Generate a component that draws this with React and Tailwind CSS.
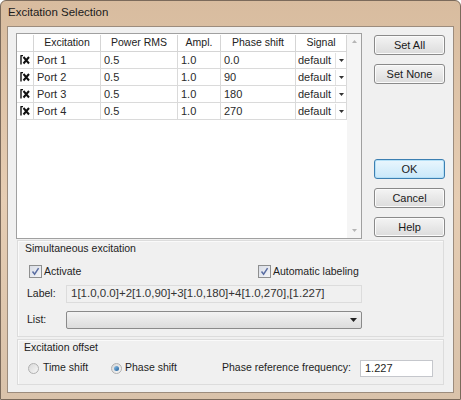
import React from 'react';

const rows = [
  { port: 'Port 1', rms: '0.5', ampl: '1.0', phase: '0.0' },
  { port: 'Port 2', rms: '0.5', ampl: '1.0', phase: '90' },
  { port: 'Port 3', rms: '0.5', ampl: '1.0', phase: '180' },
  { port: 'Port 4', rms: '0.5', ampl: '1.0', phase: '270' },
];

function XBox() {
  return (
    <svg width="11" height="10" viewBox="0 0 11 10">
      <path d="M1 0.5V9.5M0.5 0.5H3" stroke="#111" strokeWidth="1.4" fill="none" />
      <path d="M3.5 2L9 8.5M9 2L3.5 8.5" stroke="#111" strokeWidth="2" fill="none" />
    </svg>
  );
}

function Check() {
  return (
    <span className="w-[13px] h-[13px] border border-[#8e8f8f] bg-gradient-to-br from-[#d9dde6] to-[#f4f5f8] flex items-center justify-center">
      <svg width="9" height="9" viewBox="0 0 9 9">
        <path d="M1.5 4.5L3.6 7.2L7.6 1.2" stroke="#5a6ea3" strokeWidth="1.5" fill="none" />
      </svg>
    </span>
  );
}

function Radio({ on }) {
  return (
    <span className="w-[11px] h-[11px] rounded-full border border-[#b0b0b0] bg-gradient-to-br from-[#d8d8d8] to-[#f7f7f7] flex items-center justify-center">
      {on && <span className="w-[5px] h-[5px] rounded-full bg-gradient-to-br from-[#8fc3ea] to-[#1e5f98]" />}
    </span>
  );
}

function Btn({ children, primary }) {
  return (
    <div
      className={
        'w-[71px] h-[20px] rounded-[3px] flex items-center justify-center text-[#1a1a1a] ' +
        (primary
          ? 'border border-[#3c7fb1] bg-gradient-to-b from-[#eaf6fd] to-[#c9e8fa] shadow-[inset_0_0_0_1px_#b5e0f7]'
          : 'border border-[#8a8a8a] bg-gradient-to-b from-[#f4f4f4] to-[#dcdcdc] shadow-[inset_0_0_0_1px_#fbfbfb]')
      }
    >
      {children}
    </div>
  );
}

export default function App() {
  return (
    <div className="w-[461px] h-[400px] overflow-hidden font-['Liberation_Sans',Arial,sans-serif] text-[10.5px] text-[#1e1e1e] rounded-t-[6px] border border-[#7b6a5b] bg-gradient-to-b from-[#d8bc9f] via-[#e6cdb3] to-[#d9c2aa] flex flex-col">
      {/* title bar */}
      <div className="h-[25px] pl-[7px] pb-[1px] flex items-center text-[11.5px] text-[#1b1b1b]">Excitation Selection</div>

      {/* client area */}
      <div className="mx-[6px] h-[367px] border border-[#9c8c7d] bg-[#f0f0f0] pt-[6px] pl-[8px] flex flex-col">
        <div className="flex gap-[12px] h-[207px]">
          {/* table */}
          <div className="w-[346px] h-[206px] border border-[#a0a0a0] bg-white flex">
            <div className="w-[330px] flex flex-col pt-[1px]">
              <div className="flex h-[17px] border-b border-[#d5d5d5] text-[#222]">
                <div className="w-[17px] border-r border-[#d5d5d5]" />
                <div className="w-[67px] border-r border-[#d5d5d5] flex items-center justify-center">Excitation</div>
                <div className="w-[77px] border-r border-[#d5d5d5] flex items-center justify-center">Power RMS</div>
                <div className="w-[43px] border-r border-[#d5d5d5] flex items-center justify-center">Ampl.</div>
                <div className="w-[75px] border-r border-[#d5d5d5] flex items-center justify-center">Phase shift</div>
                <div className="w-[51px] border-r border-[#d5d5d5] flex items-center justify-center">Signal</div>
              </div>
              {rows.map((r) => (
                <div key={r.port} className="flex h-[17px] border-b border-[#dadada] text-[#2a2a2a] text-[11px]">
                  <div className="w-[17px] border-r border-[#dadada] flex items-center justify-center">
                    <XBox />
                  </div>
                  <div className="w-[67px] border-r border-[#dadada] flex items-center pl-[3px]">{r.port}</div>
                  <div className="w-[77px] border-r border-[#dadada] flex items-center pl-[3px]">{r.rms}</div>
                  <div className="w-[43px] border-r border-[#dadada] flex items-center pl-[3px]">{r.ampl}</div>
                  <div className="w-[75px] border-r border-[#dadada] flex items-center pl-[3px]">{r.phase}</div>
                  <div className="w-[51px] border-r border-[#dadada] flex items-center pl-[2px] justify-between">
                    <span>default</span>
                    <span className="w-[11px] h-[15px] border-l border-[#e2e2e2] flex items-center justify-center">
                      <svg width="5" height="3" viewBox="0 0 5 3"><path d="M0 0H5L2.5 3Z" fill="#333" /></svg>
                    </span>
                  </div>
                </div>
              ))}
            </div>
            {/* scrollbar */}
            <div className="w-[14px] ml-auto bg-[#f5f5f5] flex flex-col items-center justify-between py-[6px]">
              <svg width="5" height="3" viewBox="0 0 5 3"><path d="M0 3H5L2.5 0Z" fill="#b5b5b5" /></svg>
              <svg width="5" height="3" viewBox="0 0 5 3"><path d="M0 0H5L2.5 3Z" fill="#b5b5b5" /></svg>
            </div>
          </div>

          {/* buttons */}
          <div className="flex flex-col pt-[2px] text-[11px]">
            <Btn>Set All</Btn>
            <div className="mt-[9px]"><Btn>Set None</Btn></div>
            <div className="mt-[75px]"><Btn primary>OK</Btn></div>
            <div className="mt-[9px]"><Btn>Cancel</Btn></div>
            <div className="mt-[9px]"><Btn>Help</Btn></div>
          </div>
        </div>

        {/* Simultaneous excitation */}
        <div className="ml-[1px] w-[427px] h-[97px] border border-[#dcdcdc] shadow-[inset_1px_1px_0_#fafafa] flex flex-col">
          <div className="h-[15px] pl-[7px] flex items-center text-[#222]">Simultaneous excitation</div>
          <div className="h-[17px] mt-[7px] flex items-center">
            <div className="pl-[11px] w-[240px] flex items-center gap-[2px]">
              <Check />
              <span>Activate</span>
            </div>
            <div className="flex items-center gap-[2px]">
              <Check />
              <span>Automatic labeling</span>
            </div>
          </div>
          <div className="mt-[5px] flex items-center h-[18px]">
            <span className="w-[48px] pl-[9px]">Label:</span>
            <div className="w-[296px] h-[18px] border border-[#dcdcdc] bg-[#f0f0f0] flex items-center pl-[4px] text-[11.5px] text-[#333]">
              1[1.0,0.0]+2[1.0,90]+3[1.0,180]+4[1.0,270],[1.227]
            </div>
          </div>
          <div className="mt-[8px] flex items-center h-[18px]">
            <span className="w-[48px] pl-[9px]">List:</span>
            <div className="w-[296px] h-[18px] rounded-[2px] border border-[#8a8a8a] bg-gradient-to-b from-[#f3f3f3] to-[#dcdcdc] flex items-center justify-end pr-[4px]">
              <svg width="7" height="4" viewBox="0 0 7 4"><path d="M0 0H7L3.5 4Z" fill="#222" /></svg>
            </div>
          </div>
        </div>

        {/* Excitation offset */}
        <div className="ml-[1px] mt-[2px] w-[427px] h-[46px] border border-[#dcdcdc] shadow-[inset_1px_1px_0_#fafafa] flex flex-col">
          <div className="h-[15px] pl-[6px] flex items-center text-[#222]">Excitation offset</div>
          <div className="mt-[4px] h-[18px] flex items-center">
            <div className="pl-[10px] w-[93px] flex items-center gap-[4px]">
              <Radio />
              <span>Time shift</span>
            </div>
            <div className="flex items-center gap-[3px] w-[111px]">
              <Radio on />
              <span>Phase shift</span>
            </div>
            <span className="w-[138px]">Phase reference frequency:</span>
            <div className="w-[73px] h-[17px] border border-[#c5c7cc] bg-white flex items-center pl-[4px] text-[11px]">1.227</div>
          </div>
        </div>
      </div>
    </div>
  );
}
